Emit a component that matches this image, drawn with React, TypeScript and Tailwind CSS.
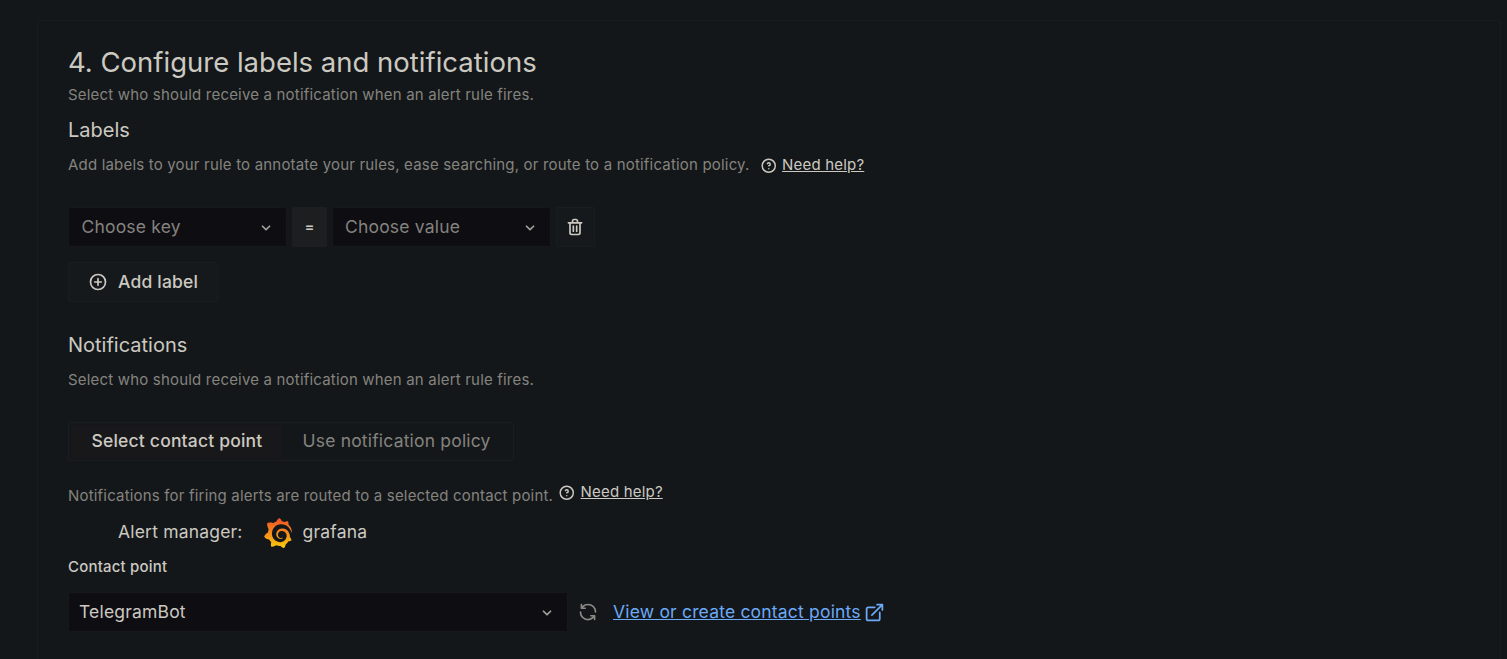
import { SiGrafana } from 'react-icons/si';

const icons = {
  angleDown:
    'M17,9.17a1,1,0,0,0-1.41,0L12,12.71,8.46,9.17a1,1,0,0,0-1.41,0,1,1,0,0,0,0,1.42l4.24,4.24a1,1,0,0,0,1.42,0L17,10.59A1,1,0,0,0,17,9.17Z',
  plusCircle:
    'M12,2A10,10,0,1,0,22,12,10,10,0,0,0,12,2Zm0,18a8,8,0,1,1,8-8A8,8,0,0,1,12,20Zm4-9H13V8a1,1,0,0,0-2,0v3H8a1,1,0,0,0,0,2h3v3a1,1,0,0,0,2,0V13h3a1,1,0,0,0,0-2Z',
  trash:
    'M10,18a1,1,0,0,0,1-1V11a1,1,0,0,0-2,0v6A1,1,0,0,0,10,18ZM20,6H16V5a3,3,0,0,0-3-3H11A3,3,0,0,0,8,5V6H4A1,1,0,0,0,4,8H5V19a3,3,0,0,0,3,3h8a3,3,0,0,0,3-3V8h1a1,1,0,0,0,0-2ZM10,5a1,1,0,0,1,1-1h2a1,1,0,0,1,1,1V6H10Zm7,14a1,1,0,0,1-1,1H8a1,1,0,0,1-1-1V8H17Zm-3-1a1,1,0,0,0,1-1V11a1,1,0,0,0-2,0v6A1,1,0,0,0,14,18Z',
  question:
    'M11.29,15.29a1.58,1.58,0,0,0-.12.15.76.76,0,0,0-.09.18.64.64,0,0,0-.06.18,1.36,1.36,0,0,0,0,.2.84.84,0,0,0,.08.38.9.9,0,0,0,.54.54.94.94,0,0,0,.76,0,.9.9,0,0,0,.54-.54A1,1,0,0,0,13,16a1,1,0,0,0-.29-.71A1,1,0,0,0,11.29,15.29ZM12,2A10,10,0,1,0,22,12,10,10,0,0,0,12,2Zm0,18a8,8,0,1,1,8-8A8,8,0,0,1,12,20ZM12,7A3,3,0,0,0,9.4,8.5a1,1,0,1,0,1.73,1A1,1,0,0,1,12,9a1,1,0,0,1,0,2,1,1,0,1,0,0,2,3,3,0,0,0,0-6Z',
  externalLink:
    'M18,10.82a1,1,0,0,0-1,1V19a1,1,0,0,1-1,1H5a1,1,0,0,1-1-1V8A1,1,0,0,1,5,7h7.18a1,1,0,0,0,0-2H5A3,3,0,0,0,2,8V19a3,3,0,0,0,3,3H16a3,3,0,0,0,3-3V11.82A1,1,0,0,0,18,10.82Zm3.92-8.2a1,1,0,0,0-.54-.54A1,1,0,0,0,21,2H15a1,1,0,0,0,0,2h3.59L8.29,14.29a1,1,0,0,0,0,1.42,1,1,0,0,0,1.42,0L20,5.41V9a1,1,0,0,0,2,0V3A1,1,0,0,0,21.92,2.62Z',
  sync:
    'M19.91,15.51H15.38a1,1,0,0,0,0,2h2.4A8,8,0,0,1,4,12a1,1,0,1,0-2,0,10,10,0,0,0,16.88,7.23V21a1,1,0,0,0,2,0V16.5A1,1,0,0,0,19.91,15.51ZM12,2A10,10,0,0,0,5.12,4.77V3a1,1,0,0,0-2,0V7.5a1,1,0,0,0,1,1h4.5a1,1,0,0,0,0-2H6.22A8,8,0,0,1,20,12a1,1,0,0,0,2,0A10,10,0,0,0,12,2Z',
};

function Icon({ name, className }: { name: keyof typeof icons; className: string }) {
  return (
    <svg viewBox="0 0 24 24" fill="currentColor" className={`shrink-0 ${className}`} aria-hidden="true">
      <path d={icons[name]} />
    </svg>
  );
}

function Select({ text, className }: { text: string; className: string }) {
  return (
    <div className={`flex items-center justify-between rounded-[2px] border border-[#16181c] bg-[#0e0d12] ${className}`}>
      <span className="pb-0.5">{text}</span>
      <Icon name="angleDown" className="mt-px size-5 text-[#a3a19b]" />
    </div>
  );
}

function NeedHelp({ className }: { className: string }) {
  return (
    <a href="#" className={`flex h-[18px] items-center text-[15px] tracking-[0.0125em] text-[#ccc9c1] ${className}`}>
      <Icon name="question" className="mt-px mr-[5px] size-[17.5px]" />
      <span className="pb-0.5 underline">Need help?</span>
    </a>
  );
}

const small = 'h-[18px] text-[15px] leading-[18px] tracking-[0.0125em] text-[#85837e]';

export default function App() {
  return (
    <main className="h-screen overflow-hidden bg-[#13171a] pt-5 pr-1.5 pl-[37px] font-['Inter',sans-serif] text-[17.5px] leading-[27px] tracking-[0.01071em] whitespace-nowrap text-[#ccc9c1]">
      <section className="flex h-[700px] flex-col items-start rounded-[2px] border border-[#181c1f] pt-[25px] pl-[30px]">
        <h3 className="h-[33px] text-[27.5px] leading-[33px] tracking-normal">4. Configure labels and notifications</h3>
        <p className={`mt-[7px] ${small}`}>Select who should receive a notification when an alert rule fires.</p>

        <h5 className="mt-[14px] h-6 text-[20px] leading-6 tracking-normal">Labels</h5>
        <div className="mt-[14px] flex">
          <p className={small}>
            Add labels to your rule to annotate your rules, ease searching, or route to a notification policy.
          </p>
          <NeedHelp className="ml-2.5" />
        </div>

        <div className="mt-[33px] flex h-10 items-center">
          <Select text="Choose key" className="h-10 w-[219px] pr-2.5 pl-[12.5px] text-[#85837e]" />
          <span className="ml-[5px] flex h-10 w-[35px] items-center justify-center rounded-[2px] bg-[#1d1e20] pb-0.5 text-[15px] font-medium">
            =
          </span>
          <Select text="Choose value" className="ml-[5px] h-10 w-[219px] pr-2.5 pl-3 text-[#85837e]" />
          <button className="ml-[5px] flex h-10 w-[39px] items-center justify-center rounded-[2px] border border-[#191d20] bg-[#15191c] pr-0.5">
            <Icon name="trash" className="size-5" />
          </button>
        </div>

        <button className="mt-[15px] flex h-10 w-[150px] items-center rounded-[2px] border border-[#191d20] bg-[#15191c] pl-[19px] font-medium">
          <Icon name="plusCircle" className="mr-2.5 size-5" />
          <span className="pb-0.5">Add label</span>
        </button>

        <h5 className="mt-[31px] h-6 text-[20px] leading-6 tracking-normal">Notifications</h5>
        <p className={`mt-[14px] ${small}`}>Select who should receive a notification when an alert rule fires.</p>

        <div className="mt-[33px] flex h-[39px] w-[446px] items-center rounded-[2px] border border-[#1a1e21] pl-[3px]">
          <button className="flex h-[33px] w-[210px] items-center justify-center rounded-[2px] bg-[#18181b] pb-0.5 font-medium">
            Select contact point
          </button>
          <button className="ml-[20.5px] pb-0.5 text-[#85837e]">Use notification policy</button>
        </div>

        <div className="mt-[22px] flex">
          <p className={`mt-1 ${small}`}>Notifications for firing alerts are routed to a selected contact point.</p>
          <NeedHelp className="ml-[5px]" />
        </div>

        <div className="mt-[13px] ml-[50px] flex h-[30px] items-center">
          <span className="pb-1">Alert manager:</span>
          <svg width="0" height="0" aria-hidden="true">
            <defs>
              <linearGradient id="flame" x1="0" y1="1" x2="0" y2="0">
                <stop offset="0" stopColor="#fcca0c" />
                <stop offset="1" stopColor="#f05028" />
              </linearGradient>
            </defs>
          </svg>
          <SiGrafana className="ml-5 size-[30px]" fill="url(#flame)" stroke="none" />
          <span className="ml-2.5 pb-1">grafana</span>
        </div>

        <label className="mt-2.5 h-[18px] text-[15px] leading-[18px] font-medium tracking-[0.0125em]">Contact point</label>
        <div className="mt-4 flex h-10 items-center">
          <Select text="TelegramBot" className="h-10 w-[500px] pr-2.5 pl-2.5" />
          <Icon name="sync" className="ml-2.5 size-5 text-[#8b8984]" />
          <a href="#" className="ml-[15px] flex items-center text-[#6ca9f7]">
            <span className="pb-0.5 underline">View or create contact points</span>
            <Icon name="externalLink" className="ml-[3.5px] size-[21px]" />
          </a>
        </div>
      </section>
    </main>
  );
}
